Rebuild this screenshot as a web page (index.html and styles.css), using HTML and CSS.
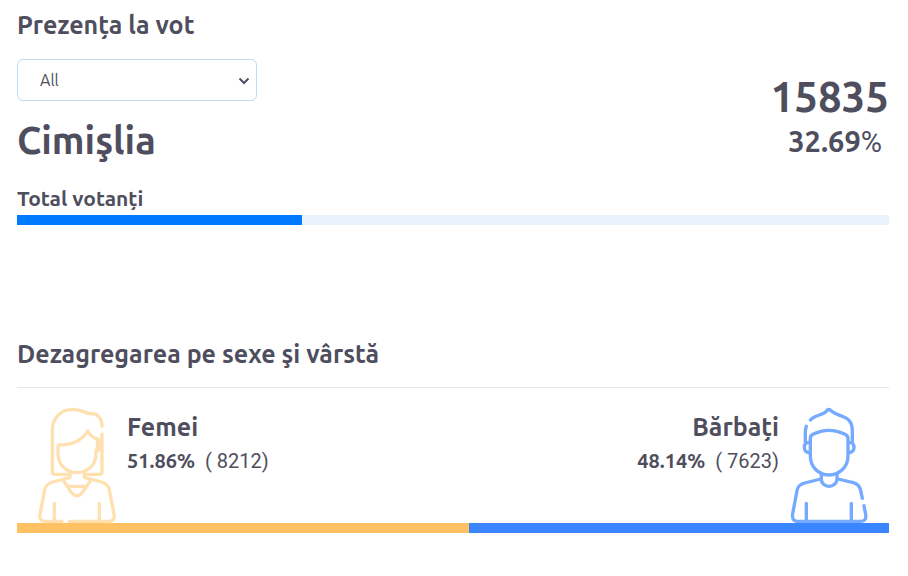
FILE: index.html
```html
<!DOCTYPE html>
<html lang="en">
<head>
<meta charset="utf-8">
<meta name="viewport" content="width=device-width, initial-scale=1">
<title>Prezența la vot</title>
<link rel="stylesheet" href="styles.css">
</head>
<body>
<main class="page">
  <section class="turnout">
    <h2 class="section-title" id="turnout-title">Prezența la vot</h2>
    <div class="summary">
      <div class="place">
        <div class="filter-box">
          <select class="filter" aria-labelledby="turnout-title">
            <option>All</option>
          </select>
          <svg class="chevron" viewBox="0 0 12 8" aria-hidden="true"><path d="M1.5 1.5L6 6L10.5 1.5"/></svg>
        </div>
        <h1 class="region">Cimişlia</h1>
      </div>
      <div class="totals">
        <div class="count">15835</div>
        <div class="percent">32.69<span class="unit">%</span></div>
      </div>
    </div>
    <h3 class="bar-label">Total votanți</h3>
    <div class="bar"><div class="fill total" style="width: 32.69%"></div></div>
  </section>

  <section class="breakdown">
    <h2 class="section-title">Dezagregarea pe sexe şi vârstă</h2>
    <div class="groups">
      <div class="group women">
        <svg class="person" viewBox="54 36 234 348" aria-hidden="true">
          <path d="M246 93C245 68 232 53 206 56C188 49 180 43 160 43C122 43 97 69 97 107V231Q97 238 104 238H150"/>
          <path d="M246 117V231Q246 238 239 238H193"/>
          <path d="M114 152V176C114 210 139 233 171 233S228 210 228 176V166Q233 164 232 151V132Q213 127 203 108C188 133 159 150 118 150Q114 150 114 154"/>
          <path d="M234 133Q243 137 243 150T233 166"/>
          <path d="M150 234V247L98 261Q78 266 74 285L60 357Q56 379 75 379H126M148 379H267Q286 379 282 357L268 285Q264 266 244 261L193 247V234"/>
          <path d="M131 258L153 291Q171 314 188 291L211 258M142 274H200M103 325V377M238 325V377"/>
        </svg>
        <div class="details">
          <h3 class="name">Femei</h3>
          <p class="share"><b>51.86%</b><span>( 8212)</span></p>
        </div>
      </div>
      <div class="group men">
        <svg class="person" viewBox="30 36 234 348" aria-hidden="true">
          <path d="M91 75C101 62 125 61 138 50Q146 38 154 48C173 64 193 60 207 76Q217 87 217 107V142M79 94Q76 102 76 112V143"/>
          <path d="M91 130Q91 121 99 118Q146 94 195 118Q204 122 204 131V184C204 215 179 240 147 240S91 215 91 184Z"/>
          <path d="M88 142Q73 142 73 157T88 173M207 142Q222 142 222 157T207 173"/>
          <path d="M124 236V253C124 265 134 274 147 274S171 265 171 253V236M122 252L74 264Q54 269 51 287L38 356Q35 379 52 379H243Q260 379 257 358L252 332M174 252L220 263Q238 268 242 286L247 310"/>
          <path d="M79 325V377M214 325V377"/>
        </svg>
        <div class="details">
          <h3 class="name">Bărbați</h3>
          <p class="share"><b>48.14%</b><span>( 7623)</span></p>
        </div>
      </div>
    </div>
    <div class="bar">
      <div class="fill female" style="width: 51.86%"></div>
      <div class="fill male" style="width: 48.14%"></div>
    </div>
  </section>
</main>
</body>
</html>
```
FILE: styles.css
```css
* {
  box-sizing: border-box;
}

body {
  margin: 0;
  background: #fff;
  color: #4e4e5e;
  font-family: Ubuntu, "Noto Sans", sans-serif;
}

h1, h2, h3, p {
  margin: 0;
}

.page {
  padding: 8px 19px 40px 17px;
}

.section-title {
  font-size: 25px;
  line-height: 34px;
}

.summary {
  display: flex;
  justify-content: space-between;
  margin-top: 17px;
}

.filter-box {
  position: relative;
  width: 240px;
}

.filter {
  display: block;
  width: 100%;
  height: 42px;
  padding: 0 24px 0 22px;
  border: 1px solid #bfd9ef;
  border-radius: 6px;
  appearance: none;
  background: #fff;
  color: #4e4e5e;
  font-family: Ubuntu, "Noto Sans", sans-serif;
  font-size: 16px;
}

.chevron {
  position: absolute;
  top: 18px;
  right: 7px;
  width: 12px;
  height: 8px;
  fill: none;
  stroke: #4e4e5e;
  stroke-width: 2;
  pointer-events: none;
}

.region {
  margin-top: 15px;
  font-size: 38px;
  line-height: 48px;
}

.totals {
  padding-top: 14px;
  text-align: right;
}

.count {
  font-size: 42px;
  font-weight: 700;
  line-height: 48px;
}

.percent {
  padding-right: 7px;
  font-size: 29px;
  font-weight: 700;
  line-height: 40px;
}

.unit {
  font-family: Roboto, sans-serif;
  font-weight: 400;
}

.bar-label {
  margin-top: 19px;
  padding-bottom: 2px;
  font-size: 21px;
  line-height: 30px;
}

.bar {
  display: flex;
  height: 10px;
  overflow: hidden;
  border-radius: 0 2px 2px 0;
  background: #e9f2fa;
}

.total {
  background: #007bff;
}

.female {
  background: #ffc164;
}

.male {
  background: #3a86ff;
}

.breakdown {
  margin-top: 112px;
}

.breakdown .bar {
  border-radius: 0;
}

.groups {
  display: flex;
  justify-content: space-between;
  margin-top: 16px;
  padding: 19px 21px 0 21px;
  border-top: 1px solid #e8e8e8;
}

.group {
  display: flex;
  gap: 11px;
}

.men {
  flex-direction: row-reverse;
  text-align: right;
}

.person {
  width: 78px;
  height: 116px;
  fill: none;
  stroke-width: 10;
  stroke-linecap: round;
  stroke-linejoin: round;
}

.women .person {
  stroke: #ffe0b1;
}

.men .person {
  stroke: #75aaff;
}

.name {
  padding-top: 4px;
  font-size: 25px;
  line-height: 32px;
}

.share {
  display: flex;
  gap: 10px;
  font-size: 20px;
  line-height: 36px;
}

.share span {
  font-family: Roboto, sans-serif;
}
```
